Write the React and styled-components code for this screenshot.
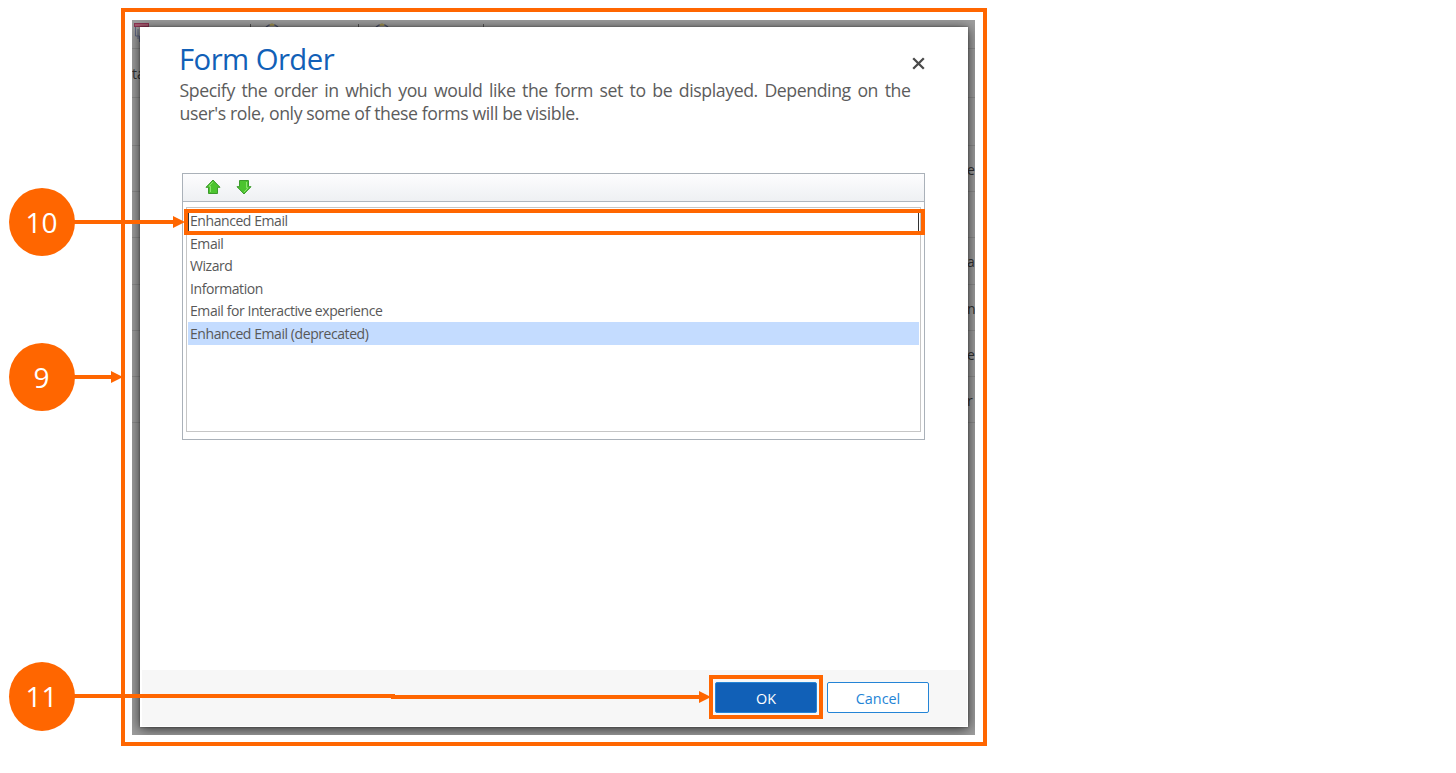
import React from 'react';
import styled, { createGlobalStyle } from 'styled-components';

const ORANGE = '#ff6600';

const GlobalStyle = createGlobalStyle`
  *, *::before, *::after { box-sizing: border-box; }
  body {
    margin: 0;
    background: #fff;
    color: #595959;
    font-family: "Open Sans", "Noto Sans", sans-serif;
  }
`;

const Page = styled.main`
  position: relative;
  height: 773px;
  padding: 8px 0 0 121px;
  overflow: hidden;
`;

const Frame = styled.section`
  width: 866px;
  height: 738px;
  border: 4px solid ${ORANGE};
  padding: 8px 7px 7px;
`;

const Backdrop = styled.div`
  position: relative;
  width: 843px;
  height: 715px;
  background: #9e9e9e;
  overflow: hidden;
`;

const BackRow = styled.div`
  display: flex;
  align-items: center;
  justify-content: space-between;
  height: ${(p) => p.$height}px;
  padding-top: 2px;
  border-bottom: 1px solid #8c8c8c;
  font-size: 14px;
  line-height: 16px;
  color: #303030;
`;

const BackIcons = styled.svg`
  display: block;
  width: 400px;
  height: 28px;
  margin-top: -2px;
  flex: none;
`;

const BackText = styled.span`
  width: 8px;
  white-space: nowrap;
`;

const Dialog = styled.div`
  position: absolute;
  left: 8px;
  top: 7px;
  width: 828px;
  height: 700px;
  display: flex;
  flex-direction: column;
  background: #fff;
  box-shadow: 0 0 2px rgba(0, 0, 0, 0.4), 0 2px 12px rgba(0, 0, 0, 0.7);
`;

const Header = styled.header`
  display: flex;
  justify-content: space-between;
  padding: 11px 42px 0 39px;
  height: 52px;
`;

const Title = styled.h1`
  margin: 0;
  font-size: 29.3px;
  line-height: 42px;
  font-weight: 400;
  letter-spacing: -0.55px;
  color: #1160b7;
`;

const CloseButton = styled.button`
  width: 15px;
  height: 15px;
  margin-top: 18px;
  padding: 0;
  border: 0;
  background: none;
  svg { display: block; }
`;

const Description = styled.p`
  width: 731px;
  margin: 0 0 0 39.5px;
  height: 94px;
  font-size: 17.7px;
  line-height: 23px;
  letter-spacing: -0.41px;
  color: #5c5c5c;
`;

const Line = styled.span`
  display: block;
  white-space: nowrap;
  text-align-last: ${(p) => (p.$justified ? 'justify' : 'left')};
`;

const Panel = styled.div`
  width: 743px;
  height: 267px;
  margin-left: 42px;
  border: 1px solid #aab1b9;
  display: flex;
  flex-direction: column;
`;

const Toolbar = styled.div`
  flex: none;
  display: flex;
  align-items: center;
  gap: 15px;
  height: 28px;
  padding: 0 0 1px 22px;
  border-bottom: 1px solid #b0b7bf;
  background: linear-gradient(#fdfdfe, #eef0f3);
`;

const ArrowIcon = styled.svg`
  display: block;
  width: 16px;
  height: 16px;
`;

const List = styled.ul`
  list-style: none;
  flex: 1;
  margin: 5px 3px 7px;
  padding: 1px 1px 0;
  border: 1px solid #c6c6c6;
`;

const Item = styled.li`
  height: 22.6px;
  padding-left: 2px;
  font-size: 14px;
  line-height: 23px;
  letter-spacing: -0.43px;
  white-space: nowrap;
  color: #585858;
  background: ${(p) => (p.$selected ? '#c4dcff' : 'transparent')};
  box-shadow: ${(p) => (p.$focused ? 'inset 1px 0 #333, inset -1px -1px #333' : 'none')};
`;

const Footer = styled.footer`
  display: flex;
  justify-content: flex-end;
  gap: 10px;
  height: 56px;
  margin: auto 1px 1px 2px;
  padding: 12px 38px 0 0;
  background: #f7f7f7;
`;

const Button = styled.button`
  width: 102px;
  height: 31px;
  padding: 3px 0 0;
  border: 1px solid #2484d6;
  border-radius: 2px;
  font: 14.4px/24px "Open Sans", sans-serif;
  background: ${(p) => (p.$primary ? '#1160b7' : '#fff')};
  color: ${(p) => (p.$primary ? '#fff' : '#2484d6')};
`;

const Highlight = styled.div`
  position: absolute;
  left: ${(p) => p.$x}px;
  top: ${(p) => p.$y}px;
  width: ${(p) => p.$w}px;
  height: ${(p) => p.$h}px;
  border: 4px solid ${ORANGE};
`;

const Connectors = styled.svg`
  position: absolute;
  left: 0;
  top: 0;
`;

const Callout = styled.div`
  position: absolute;
  left: 9px;
  top: ${(p) => p.$y}px;
  width: 66px;
  height: ${(p) => p.$h || 68}px;
  padding-right: 1px;
  border-radius: 50%;
  background: ${ORANGE};
  color: #fff;
  font-size: 28px;
  line-height: 69px;
  text-align: center;
`;

const backRows = [
  [49, 'ta', ''], [48, '', ''], [46, '', 'e'], [46, '', ''], [47, '', 'a'],
  [46, '', 'n'], [46, '', 'e'], [46, '', 'r'],
];

const forms = [
  'Enhanced Email', 'Email', 'Wizard', 'Information',
  'Email for Interactive experience', 'Enhanced Email (deprecated)',
];

function MoveIcon({ down }) {
  return (
    <ArrowIcon viewBox="0 0 16 16">
      <g transform={down ? 'rotate(180 8 8)' : undefined}>
        <path d="M8 1 15 8.3H12.5V14.5H3.5V8.3H1Z" fill="#4cc42f" stroke="#3c9a2b" strokeLinejoin="round" />
        <path d="M8 2.8 4 7.2H5.5V13" fill="none" stroke="#8be56d" />
      </g>
    </ArrowIcon>
  );
}

export default function App() {
  return (
    <>
      <GlobalStyle />
      <Page>
        <Frame>
          <Backdrop>
            <BackRow $height={29}>
              <BackIcons viewBox="0 0 400 28">
                <rect x="2.5" y="3.5" width="14" height="3" fill="#a85b70" stroke="#8c3352" />
                <path d="M3.5 7v9h4v6M6 9v10" fill="none" stroke="#5f6684" />
                <path d="M118.5 4v6M226.5 4v6M351.5 4v6" stroke="#555" />
                <path d="M134 7q6-5 12 0M244 7q6-5 12 0" fill="none" stroke="#4e526b" strokeWidth="1.5" />
                <path d="M138 5.5q2-2 4 0M248 5.5q2-2 4 0" stroke="#a3934e" strokeWidth="2" fill="none" />
              </BackIcons>
            </BackRow>
            {backRows.map(([height, left, right], i) => (
              <BackRow key={i} $height={height}>
                <BackText>{left}</BackText>
                <BackText>{right}</BackText>
              </BackRow>
            ))}
            <Dialog>
              <Header>
                <Title>Form Order</Title>
                <CloseButton aria-label="Close">
                  <svg width="15" height="15" viewBox="0 0 15 15">
                    <path d="M2.2 2.2 12.8 12.8M12.8 2.2 2.2 12.8" stroke="#4a4a4a" strokeWidth="2.3" />
                  </svg>
                </CloseButton>
              </Header>
              <Description>
                <Line $justified>
                  Specify the order in which you would like the form set to be displayed. Depending on the
                </Line>
                <Line>user's role, only some of these forms will be visible.</Line>
              </Description>
              <Panel>
                <Toolbar>
                  <MoveIcon />
                  <MoveIcon down />
                </Toolbar>
                <List>
                  {forms.map((name, i) => (
                    <Item key={name} $focused={i === 0} $selected={i === 5}>{name}</Item>
                  ))}
                </List>
              </Panel>
              <Footer>
                <Button $primary>OK</Button>
                <Button>Cancel</Button>
              </Footer>
            </Dialog>
          </Backdrop>
        </Frame>
        <Highlight $x={184} $y={209} $w={741} $h={26} />
        <Highlight $x={709} $y={675} $w={114} $h={44} />
        <Connectors width="1000" height="773" fill={ORANGE}>
          <path d="M70 220H173V216L185 222 173 228V224H70Z" />
          <path d="M70 375H111V371L123 377 111 383V379H70Z" />
          <path d="M70 694H395V695H699V691L711 697 699 703V699H391V698H70Z" />
        </Connectors>
        <Callout $y={188}>10</Callout>
        <Callout $y={343}>9</Callout>
        <Callout $y={662} $h={69}>11</Callout>
      </Page>
    </>
  );
}
